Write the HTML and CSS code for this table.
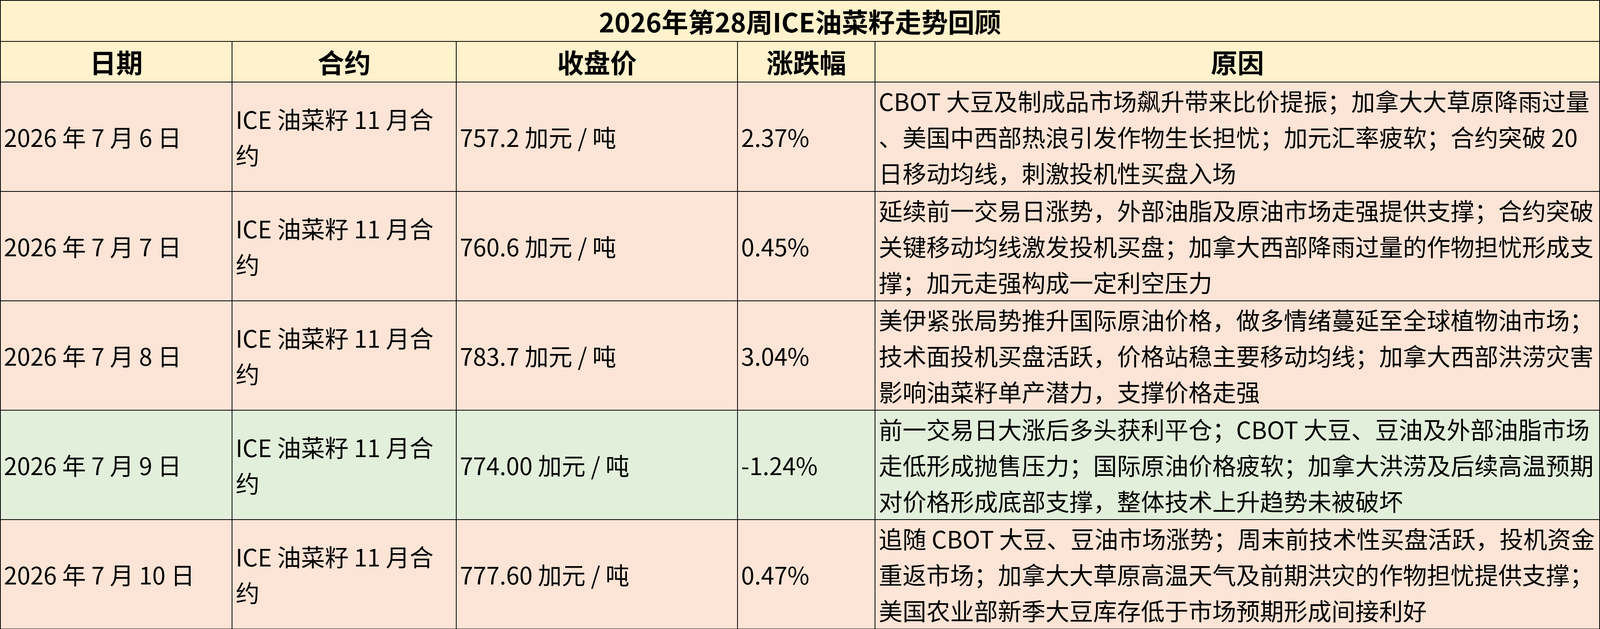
FILE: index.html
```html
<!DOCTYPE html>
<html lang="zh-CN">
<head>
<meta charset="utf-8">
<title>2026年第28周ICE油菜籽走势回顾</title>
<link rel="stylesheet" href="styles.css">
</head>
<body>
<table class="review">
  <colgroup>
    <col class="c-date">
    <col class="c-contract">
    <col class="c-price">
    <col class="c-change">
    <col class="c-reason">
  </colgroup>
  <thead>
    <tr class="title-row"><th colspan="5" class="title">2026年第28周ICE油菜籽走势回顾</th></tr>
    <tr class="head-row">
      <th>日期</th><th>合约</th><th>收盘价</th><th>涨跌幅</th><th>原因</th>
    </tr>
  </thead>
  <tbody>
    <tr class="up">
      <td>2026 年 7 月 6 日</td>
      <td class="contract">ICE 油菜籽 11 月合约</td>
      <td>757.2 加元 / 吨</td>
      <td>2.37%</td>
      <td class="reason">CBOT 大豆及制成品市场飙升带来比价提振；加拿大大草原降雨过量<br>、美国中西部热浪引发作物生长担忧；加元汇率疲软；合约突破 20<br>日移动均线，刺激投机性买盘入场</td>
    </tr>
    <tr class="up">
      <td>2026 年 7 月 7 日</td>
      <td class="contract">ICE 油菜籽 11 月合约</td>
      <td>760.6 加元 / 吨</td>
      <td>0.45%</td>
      <td class="reason">延续前一交易日涨势，外部油脂及原油市场走强提供支撑；合约突破<br>关键移动均线激发投机买盘；加拿大西部降雨过量的作物担忧形成支<br>撑；加元走强构成一定利空压力</td>
    </tr>
    <tr class="up">
      <td>2026 年 7 月 8 日</td>
      <td class="contract">ICE 油菜籽 11 月合约</td>
      <td>783.7 加元 / 吨</td>
      <td>3.04%</td>
      <td class="reason">美伊紧张局势推升国际原油价格，做多情绪蔓延至全球植物油市场；<br>技术面投机买盘活跃，价格站稳主要移动均线；加拿大西部洪涝灾害<br>影响油菜籽单产潜力，支撑价格走强</td>
    </tr>
    <tr class="down">
      <td>2026 年 7 月 9 日</td>
      <td class="contract">ICE 油菜籽 11 月合约</td>
      <td>774.00 加元 / 吨</td>
      <td>-1.24%</td>
      <td class="reason">前一交易日大涨后多头获利平仓；CBOT 大豆、豆油及外部油脂市场<br>走低形成抛售压力；国际原油价格疲软；加拿大洪涝及后续高温预期<br>对价格形成底部支撑，整体技术上升趋势未被破坏</td>
    </tr>
    <tr class="up">
      <td>2026 年 7 月 10 日</td>
      <td class="contract">ICE 油菜籽 11 月合约</td>
      <td>777.60 加元 / 吨</td>
      <td>0.47%</td>
      <td class="reason">追随 CBOT 大豆、豆油市场涨势；周末前技术性买盘活跃，投机资金<br>重返市场；加拿大大草原高温天气及前期洪灾的作物担忧提供支撑；<br>美国农业部新季大豆库存低于市场预期形成间接利好</td>
    </tr>
  </tbody>
</table>
</body>
</html>
```
FILE: styles.css
```css
html, body {
  margin: 0;
  padding: 0;
  background: #ffffff;
  overflow: hidden;
}

body {
  font-family: "Noto Sans CJK SC", "Noto Sans", sans-serif;
  color: #000000;
}

.review {
  width: 100%;
  border-collapse: collapse;
  table-layout: fixed;
  box-sizing: border-box;
}

.c-date { width: 14.49%; }
.c-contract { width: 14.02%; }
.c-price { width: 17.59%; }
.c-change { width: 8.60%; }
.c-reason { width: 45.30%; }

.review th,
.review td {
  box-sizing: border-box;
  border: 2px solid #000000;
  padding: 0 8px;
  vertical-align: middle;
  overflow: hidden;
}

.review th {
  background: #fff2cc;
  font-size: 68px;
  font-weight: 700;
  line-height: 98px;
  text-align: center;
}

.title-row { height: 105px; }
.head-row { height: 104px; }

.review td {
  font-size: 61px;
  font-weight: 400;
  line-height: 92px;
  text-align: left;
}

.review tbody tr { height: 280px; }

.up td { background: #fce4d6; }
.down td { background: #e2efda; }

.review td.contract {
  padding-right: 40px;
}
```
